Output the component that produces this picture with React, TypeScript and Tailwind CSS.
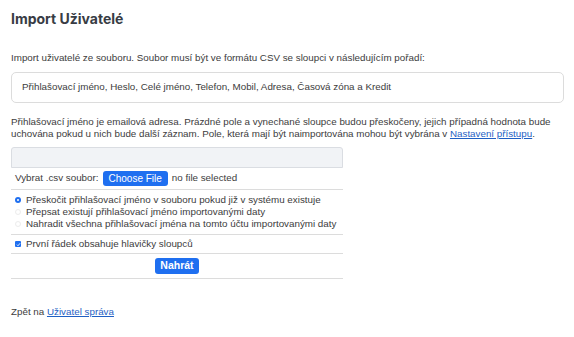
import React from "react";

export default function App() {
  return (
    <div className="min-h-[337px] w-[574px] bg-white px-[11px] pt-[10px] text-[9.8px] text-[#3c3c3c] font-['Liberation_Sans',Arial,sans-serif]">
      {/* title */}
      <h1 className="text-[14px] font-bold text-[#383c44] font-['Inter',sans-serif] leading-[18px]">
        Import Uživatelé
      </h1>

      <p className="mt-[24px] leading-[12px]">
        Import uživatelé ze souboru. Soubor musí být ve formátu CSV se sloupci v následujícím pořadí:
      </p>

      {/* columns box */}
      <div className="mt-[8px] h-[31px] w-[553px] rounded-[5px] border border-[#dcdcdc] px-[10px] flex items-center">
        Přihlašovací jméno, Heslo, Celé jméno, Telefon, Mobil, Adresa, Časová zóna a Kredit
      </div>

      <p className="mt-[13px] leading-[11.5px]">
        Přihlašovací jméno je emailová adresa. Prázdné pole a vynechané sloupce budou přeskočeny, jejich případná hodnota bude
        uchována pokud u nich bude další záznam. Pole, která mají být naimportována mohou být vybrána v{" "}
        <a href="#" className="text-[#1f5fc4] underline">
          Nastavení přístupu
        </a>
        .
      </p>

      {/* form */}
      <div className="mt-[8px] w-[332px]">
        <div className="h-[21px] rounded-t-[3px] border border-[#dadde2] bg-[#f1f3f6]" />
        <div className="flex items-center gap-[4px] h-[22px] pl-[4px] border-b border-[#dcdcdc]">
          <span>Vybrat .csv soubor:</span>
          <span className="rounded-[3px] bg-[#1f6ff0] px-[6px] h-[15px] flex items-center text-white text-[10px]">
            Choose File
          </span>
          <span>no file selected</span>
        </div>

        <div className="flex flex-col py-[4px] border-b border-[#dcdcdc]">
          {[
            "Přeskočit přihlašovací jméno v souboru pokud již v systému existuje",
            "Přepsat existují přihlašovací jméno importovanými daty",
            "Nahradit všechna přihlašovací jména na tomto účtu importovanými daty",
          ].map((t, i) => (
            <label key={t} className="flex items-center h-[12px] gap-[5px] pl-[4px]">
              {i === 0 ? (
                <span className="w-[6px] h-[6px] rounded-full bg-[#1f6ff0] flex items-center justify-center">
                  <span className="w-[2px] h-[2px] rounded-full bg-white" />
                </span>
              ) : (
                <span className="w-[6px] h-[6px] rounded-full border border-[#ececec]" />
              )}
              <span>{t}</span>
            </label>
          ))}
        </div>

        <div className="flex items-center gap-[5px] h-[19px] pl-[4px] border-b border-[#dcdcdc]">
          <span className="w-[6px] h-[6px] rounded-[1px] bg-[#1f6ff0] flex items-center justify-center">
            <svg viewBox="0 0 8 8" className="w-[5px] h-[5px]">
              <path d="M1.5 4.2 3.2 6 6.5 2" stroke="white" strokeWidth="1.4" fill="none" />
            </svg>
          </span>
          <span>První řádek obsahuje hlavičky sloupců</span>
        </div>

        <div className="flex justify-center h-[25px] items-center border-b border-[#dcdcdc]">
          <span className="rounded-[3px] bg-[#1f6ff0] px-[5px] h-[16px] flex items-center text-white text-[10.5px] font-semibold">
            Nahrát
          </span>
        </div>
      </div>

      <p className="mt-[26px]">
        Zpět na{" "}
        <a href="#" className="text-[#1f5fc4] underline">
          Uživatel správa
        </a>
      </p>
    </div>
  );
}
